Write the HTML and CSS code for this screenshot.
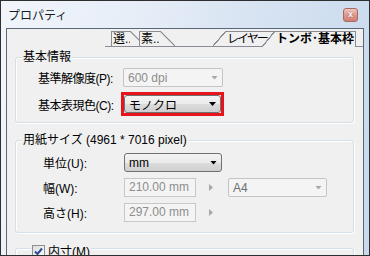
FILE: index.html
```html
<!DOCTYPE html>
<html>
<head>
  <meta charset="UTF-8">
  <title>プロパティ</title>
  <link rel="stylesheet" href="styles.css">
</head>
<body>
  <div class="window">
    <!-- Title bar -->
    <div class="titlebar">
      <span class="title">プロパティ</span>
      <span class="close-btn">x</span>
    </div>

    <div class="client">
      <!-- Tab strip -->
      <div class="tabs">
        <div class="tab slant-right t1">選...</div>
        <div class="tab slant-right t2">素...</div>
        <div class="tab slant-left t3">レイヤー</div>
        <div class="tab slant-left active">トンボ･基本枠</div>
      </div>

      <div class="page">
        <!-- Basic info -->
        <div class="group g1">
          <div class="group-title">基本情報</div>
          <div class="row r1">
            <span class="label">基準解像度(P):</span>
            <div class="combo disabled">
              <span class="value">600 dpi</span>
              <span class="arrow"></span>
            </div>
          </div>
          <div class="row r2">
            <span class="label">基本表現色(C):</span>
            <div class="highlight">
              <div class="combo">
                <span class="value">モノクロ</span>
                <span class="arrow"></span>
              </div>
            </div>
          </div>
        </div>

        <!-- Paper size -->
        <div class="group g2">
          <div class="group-title">用紙サイズ (4961 * 7016 pixel)</div>
          <div class="row">
            <span class="label">単位(U):</span>
            <div class="combo">
              <span class="value">mm</span>
              <span class="arrow"></span>
            </div>
          </div>
          <div class="row">
            <span class="label">幅(W):</span>
            <div class="field disabled">210.00 mm</div>
            <span class="spin"></span>
            <div class="combo disabled preset">
              <span class="value">A4</span>
              <span class="arrow"></span>
            </div>
          </div>
          <div class="row">
            <span class="label">高さ(H):</span>
            <div class="field disabled">297.00 mm</div>
            <span class="spin"></span>
          </div>
        </div>

        <!-- Inner size -->
        <div class="group g3">
          <div class="group-title check-title">
            <span class="checkbox">
              <svg width="9" height="9" viewBox="0 0 9 9"><path d="M1 4.5 L3.5 7 L8 1.5" fill="none" stroke="#2a4a9a" stroke-width="2"/></svg>
            </span>
            <span>内寸(M)</span>
          </div>
        </div>
      </div>
    </div>
  </div>
</body>
</html>
```

FILE: styles.css
```css
/* Base */
* {
  box-sizing: border-box;
  font-family: "Liberation Sans", "Noto Sans CJK JP", sans-serif;
}

body {
  margin: 0;
  background: #fff;
}

/* Window frame */
.window {
  width: 370px;
  height: 256px;
  border: 1px solid #2e2e2e;
  padding: 0 5px;
  overflow: hidden;
  background: linear-gradient(100deg, #f1f5fb 0%, #e6edf7 35%, #d8e4f2 60%, #c8d9ed 100%);
}

.titlebar {
  height: 27px;
  display: flex;
  align-items: center;
  justify-content: space-between;
  padding: 0 6px 0 2px;
}

.title {
  font-size: 12px;
  color: #1b1b1b;
}

.close-btn {
  width: 15px;
  height: 14px;
  border: 1px solid #a86a60;
  border-radius: 3px;
  background: linear-gradient(#efc6bf, #dc978c 50%, #cf8074);
  color: #fff;
  font-size: 9px;
  font-weight: bold;
  line-height: 11px;
  text-align: center;
  text-shadow: 0 0 1px #7a3a30;
}

/* Client area */
.client {
  height: 240px;
  border: 1px solid #5b6776;
  border-bottom: none;
  background: #f0f0f0;
}

/* Tabs */
.tabs {
  display: flex;
  align-items: flex-end;
  height: 18px;
  margin-left: 98px;
  border-bottom: 1px solid #898c95;
}

.tab {
  position: relative;
  height: 15px;
  padding-left: 1px;
  border-top: 1px solid #898c95;
  background: #f0f0f0;
  font-size: 12px;
  line-height: 14px;
  color: #000;
  white-space: nowrap;
}

.tab.slant-right::after {
  content: "";
  position: absolute;
  left: 100%;
  top: -1px;
  width: 15px;
  height: 15px;
  background: linear-gradient(to top right, #f0f0f0 calc(50% - 0.8px), #898c95 calc(50% - 0.5px), #898c95 calc(50% + 0.5px), transparent calc(50% + 0.8px));
}

.tab.slant-left::before {
  content: "";
  position: absolute;
  right: 100%;
  top: -1px;
  width: 13px;
  height: 15px;
  background: linear-gradient(to top left, #f0f0f0 calc(50% - 0.8px), #898c95 calc(50% - 0.5px), #898c95 calc(50% + 0.5px), transparent calc(50% + 0.8px));
}

.t1 {
  width: 19px;
  margin-left: 6px;
  border-left: 1px solid #898c95;
}

.t2 {
  width: 21px;
  margin-left: 9px;
  border-left: 1px solid #898c95;
}

.t3 {
  width: 49px;
  margin-left: 66px;
  letter-spacing: -2px;
}

.tab.active {
  width: 81px;
  height: 16px;
  margin-bottom: -1px;
  border-right: 1px solid #898c95;
  font-weight: bold;
}

.tab.active::before {
  height: 16px;
}

/* Tab page */
.page {
  padding: 10px 9px 0 8px;
}

.group {
  border: 1px solid #d5dfe5;
  border-radius: 3px;
  box-shadow: inset 1px 1px 0 #fff, 1px 1px 0 #fff;
}

.group-title {
  width: fit-content;
  height: 14px;
  margin: -8px 0 0 6px;
  padding: 0 1px;
  background: #f0f0f0;
  font-size: 12px;
  line-height: 14px;
  color: #000;
  white-space: nowrap;
}

.g1 {
  padding-bottom: 6px;
}

.g2 {
  margin-top: 17px;
  padding-bottom: 10px;
}

.g3 {
  margin-top: 15px;
  height: 30px;
}

/* Rows */
.row {
  display: flex;
  align-items: center;
  height: 19px;
  margin-top: 6px;
}

.g1 .row {
  padding-left: 22px;
}

.g2 .row {
  padding-left: 27px;
}

.g1 .r1 {
  margin-top: 4px;
}

.g1 .r2 {
  height: 24px;
  margin-top: 5px;
}

.label {
  font-size: 12px;
  color: #000;
  white-space: nowrap;
}

.g1 .label {
  width: 85px;
  letter-spacing: -0.5px;
}

.g2 .label {
  width: 81px;
}

/* Combo boxes */
.combo {
  display: flex;
  align-items: center;
  justify-content: space-between;
  width: 100px;
  height: 19px;
  padding: 0 4px 0 4px;
  border: 1px solid #707070;
  border-radius: 3px;
  background: linear-gradient(#f3f3f3, #ebebeb 50%, #dddddd 50%, #cfcfcf);
  font-size: 12px;
  color: #000;
}

.g2 .combo {
  width: 98px;
}

.combo .arrow {
  width: 7px;
  height: 4px;
  background: #000;
  clip-path: polygon(0 0, 100% 0, 50% 100%);
}

.combo.disabled {
  border-color: #c2c4c6;
  border-radius: 2px;
  background: #f4f4f4;
  color: #8d8d8d;
}

.combo.disabled .arrow {
  background: #a8a8a8;
}

.combo.preset {
  width: 99px;
  margin-left: 15px;
  color: #6e6e6e;
}

/* Red annotation box */
.highlight {
  margin-left: -2px;
  border: 3px solid #e8141b;
}

.highlight .combo {
  width: 97px;
  height: 18px;
}

/* Text fields */
.field {
  width: 72px;
  height: 19px;
  padding-left: 4px;
  border: 1px solid #c6c8ca;
  background: #f4f4f4;
  font-size: 12px;
  line-height: 17px;
  color: #8d8d8d;
}

.spin {
  width: 4px;
  height: 7px;
  margin-left: 13px;
  background: #a8a8a8;
  clip-path: polygon(0 0, 100% 50%, 0 100%);
}

/* Checkbox title */
.check-title {
  display: flex;
  align-items: center;
  gap: 3px;
  height: 13px;
  margin: -4px 0 0 15px;
}

.checkbox {
  display: flex;
  align-items: center;
  justify-content: center;
  width: 13px;
  height: 13px;
  border: 1px solid #8e8f8f;
  background: linear-gradient(135deg, #dcdcdc, #fefefe);
}
```
